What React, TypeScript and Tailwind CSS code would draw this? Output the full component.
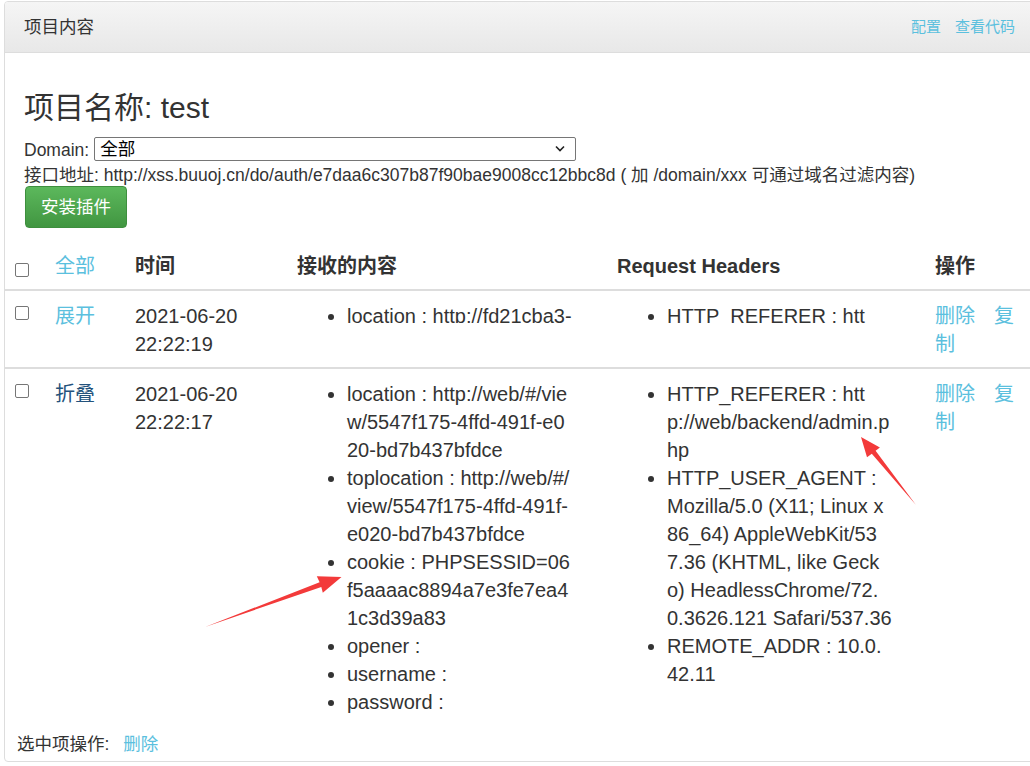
import React from 'react';

const font = "font-['Liberation_Sans','Noto_Sans_CJK_SC',sans-serif]";

const Check = ({ top }: { top: string }) => (
  <input
    type="checkbox"
    className={`block appearance-none w-[14px] h-[14px] border border-[#767676] rounded-[2px] bg-white ${top}`}
  />
);

const Lines = ({ lines }: { lines: string[] }) => (
  <>
    {lines.map((l, i) => (
      <span key={i} className="block whitespace-nowrap">
        {l}
      </span>
    ))}
  </>
);

const received: string[][] = [
  ['location : http://web/#/vie', 'w/5547f175-4ffd-491f-e0', '20-bd7b437bfdce'],
  ['toplocation : http://web/#/', 'view/5547f175-4ffd-491f-', 'e020-bd7b437bfdce'],
  ['cookie : PHPSESSID=06', 'f5aaaac8894a7e3fe7ea4', '1c3d39a83'],
  ['opener :'],
  ['username :'],
  ['password :'],
];

const headers: string[][] = [
  ['HTTP_REFERER : htt', 'p://web/backend/admin.p', 'hp'],
  [
    'HTTP_USER_AGENT :',
    'Mozilla/5.0 (X11; Linux x',
    '86_64) AppleWebKit/53',
    '7.36 (KHTML, like Geck',
    'o) HeadlessChrome/72.',
    '0.3626.121 Safari/537.36',
  ],
  ['REMOTE_ADDR : 10.0.', '42.11'],
];

const Actions = () => (
  <div className="w-[90px] text-[#5bc0de]">
    <a>删除</a>
    <a className="ml-[19px]">复制</a>
  </div>
);

const th = 'px-[10px] pt-[11px] pb-[9px] border-b-2 border-[#ddd]';
const td = 'px-[10px] pt-[11px] pb-[9px]';
const td2 = 'px-[10px] pt-[11px] pb-[9px] border-t-2 border-[#ddd]';

export default function App() {
  return (
    <div className={`relative w-[1030px] h-[766px] overflow-hidden bg-white text-[#333] ${font}`}>
      <div className="ml-[4px] mt-[1px] w-[1040px] border border-[#ddd] rounded-[4px] overflow-hidden">
        {/* panel heading */}
        <div className="h-[51px] flex items-center justify-between pl-[19px] pr-[28px] bg-gradient-to-b from-[#f5f5f5] to-[#e8e8e8] border-b border-[#ddd]">
          <span className="text-[17.5px]">项目内容</span>
          <div className="flex gap-[14px] text-[15px] text-[#5bc0de]">
            <a>配置</a>
            <a>查看代码</a>
          </div>
        </div>

        {/* panel body */}
        <div className="px-[19px] text-[17.5px]">
          <h2 className="mt-[38px] text-[30px] leading-[33px]">项目名称: test</h2>
          <div className="mt-[12px] h-[25px] flex items-center">
            <span className="mt-[4px]">Domain:</span>
            <div className="ml-[5px] w-[482px] h-[24px] border border-[#767676] rounded-[2px] flex items-center justify-between pl-[5px] pr-[10px] text-black leading-none">
              <span className="mt-[3px]">全部</span>
              <svg width="10" height="7" viewBox="0 0 10 7" fill="none">
                <path d="M1 1.5 L5 5.5 L9 1.5" stroke="#222" strokeWidth="1.6" />
              </svg>
            </div>
          </div>
          <div className="h-[25px] pt-[2px] leading-[25px] whitespace-nowrap">
            接口地址: http://xss.buuoj.cn/do/auth/e7daa6c307b87f90bae9008cc12bbc8d ( 加 /domain/xxx 可通过域名过滤内容)
          </div>
          <button className="ml-[1px] w-[102px] h-[42px] rounded-[4px] border border-[#3e8f3e] bg-gradient-to-b from-[#5cb85c] to-[#419641] text-white text-[17.5px]">
            安装插件
          </button>
        </div>

        {/* table */}
        <table className="mt-[13px] w-[1030px] table-fixed border-separate border-spacing-0 text-[20px] leading-[28px]">
          <colgroup>
            <col className="w-[40px]" />
            <col className="w-[80px]" />
            <col className="w-[162px]" />
            <col className="w-[320px]" />
            <col className="w-[318px]" />
            <col className="w-[110px]" />
          </colgroup>
          <thead>
            <tr className="text-left align-bottom">
              <th className={`${th} align-top`}>
                <Check top="mt-[11px]" />
              </th>
              <th className={`${th} font-normal text-[#5bc0de]`}>全部</th>
              <th className={`${th} font-bold`}>时间</th>
              <th className={`${th} font-bold`}>接收的内容</th>
              <th className={`${th} font-bold`}>Request Headers</th>
              <th className={`${th} font-bold`}>操作</th>
            </tr>
          </thead>
          <tbody>
            <tr className="align-top">
              <td className={td}>
                <Check top="mt-[4px]" />
              </td>
              <td className={`${td} text-[#5bc0de]`}>展开</td>
              <td className={td}>
                <Lines lines={['2021-06-20', '22:22:19']} />
              </td>
              <td className={td}>
                <div className="h-[21px] overflow-hidden">
                  <ul className="list-disc pl-[50px]">
                    <li className="whitespace-nowrap">location : http://fd21cba3-</li>
                  </ul>
                </div>
              </td>
              <td className={td}>
                <div className="h-[21px] overflow-hidden">
                  <ul className="list-disc pl-[50px]">
                    <li className="whitespace-nowrap">HTTP_REFERER : htt</li>
                  </ul>
                </div>
              </td>
              <td className={td}>
                <Actions />
              </td>
            </tr>
            <tr className="align-top">
              <td className={td2}>
                <Check top="mt-[4px]" />
              </td>
              <td className={`${td2} text-[#23527c]`}>折叠</td>
              <td className={td2}>
                <Lines lines={['2021-06-20', '22:22:17']} />
              </td>
              <td className={td2}>
                <ul className="list-disc pl-[50px]">
                  {received.map((item, i) => (
                    <li key={i}>
                      <Lines lines={item} />
                    </li>
                  ))}
                </ul>
              </td>
              <td className={td2}>
                <ul className="list-disc pl-[50px]">
                  {headers.map((item, i) => (
                    <li key={i}>
                      <Lines lines={item} />
                    </li>
                  ))}
                </ul>
              </td>
              <td className={td2}>
                <Actions />
              </td>
            </tr>
          </tbody>
        </table>

        {/* footer */}
        <div className="mt-[5px] mb-[6px] pl-[12px] h-[25px] pt-[2px] leading-[25px] text-[17.5px]">
          选中项操作: <a className="ml-[9px] text-[#5bc0de]">删除</a>
        </div>
      </div>

      {/* red annotation arrows */}
      <svg className="absolute left-0 top-0 pointer-events-none" width="1030" height="766">
        <polygon
          points="205,627 321.3,586.9 322.8,592.7 341.5,577 316.8,576.3 319.6,582.3"
          fill="#f33a3a"
        />
        <polygon
          points="916,505 875.6,450.7 879.9,447.6 861,437 867,457.2 871.8,453.8"
          fill="#f33a3a"
        />
      </svg>
    </div>
  );
}
